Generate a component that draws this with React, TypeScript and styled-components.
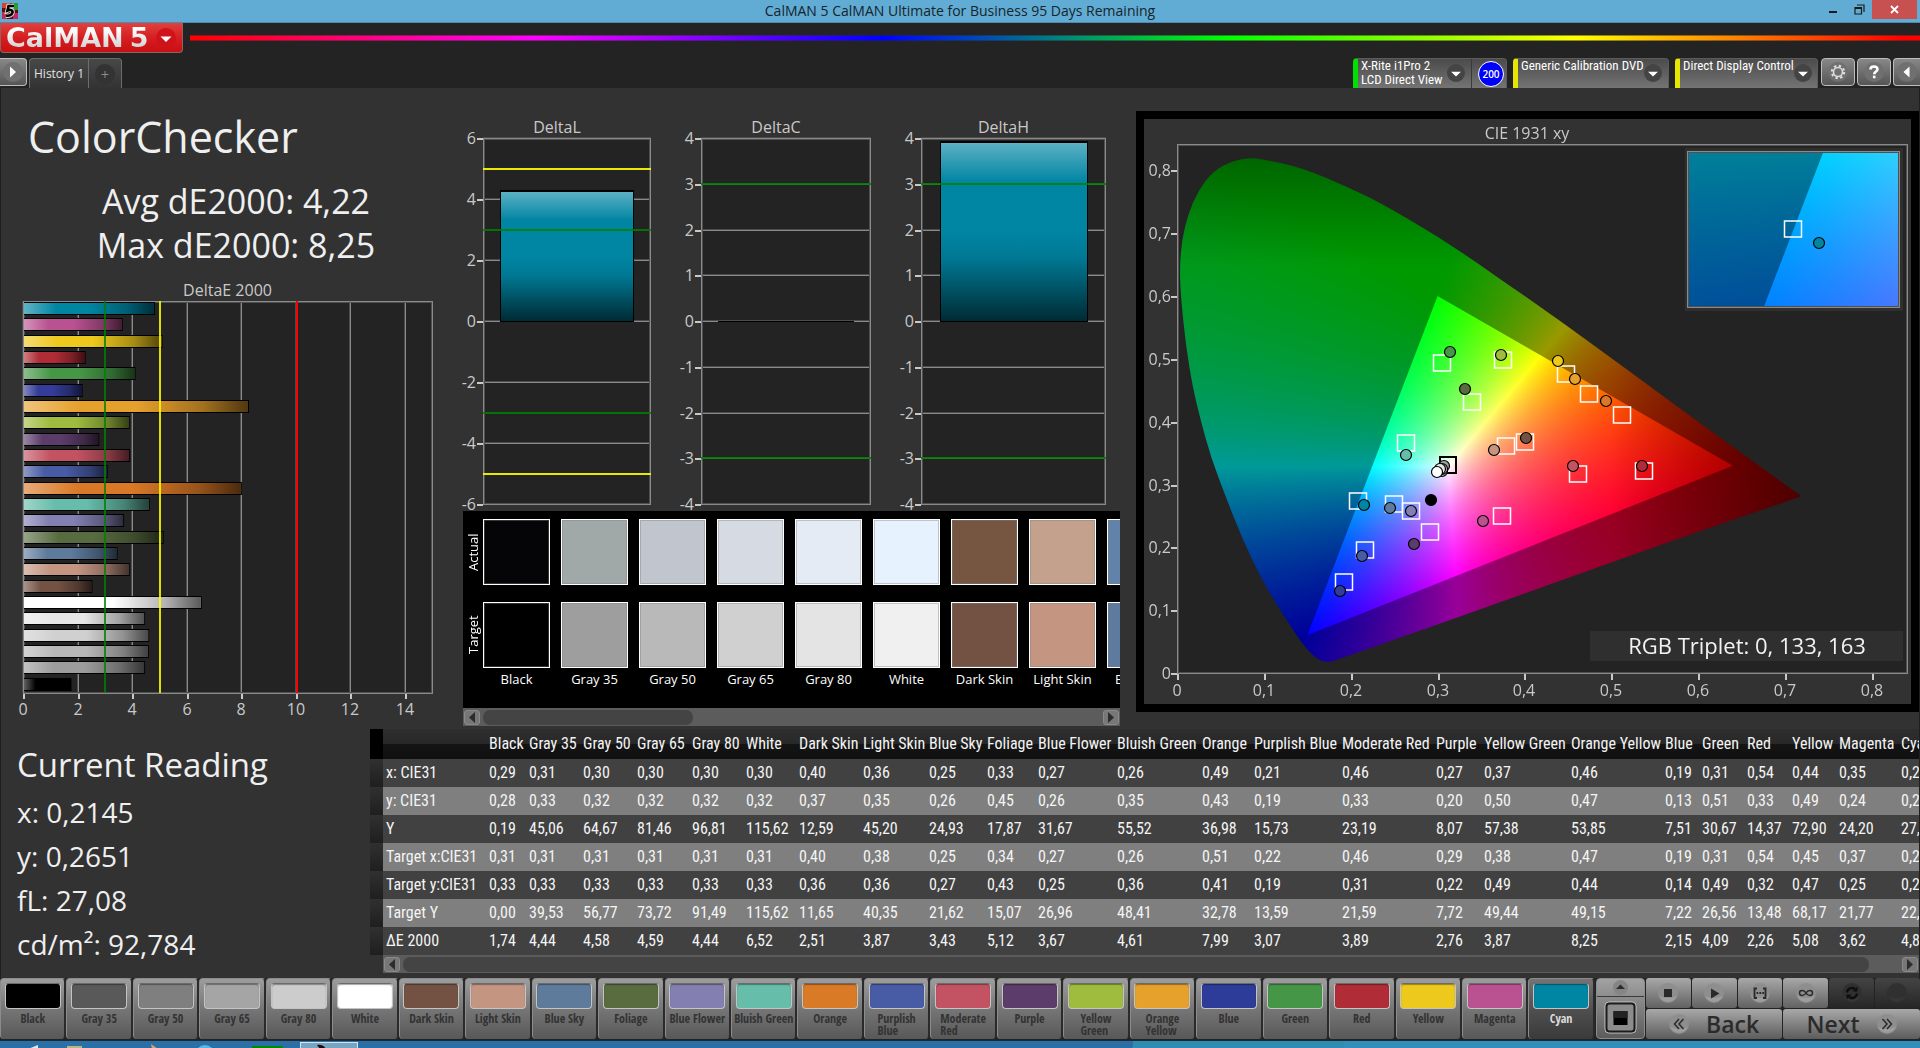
import React, { useLayoutEffect, useRef, useState } from 'react';
import styled, { createGlobalStyle, css } from 'styled-components';

const NARROW = '"Roboto Condensed", "Liberation Sans Narrow", "Open Sans Condensed Light", "Open Sans Condensed", "Open Sans", sans-serif';
const NARROW_BOLD = '"Open Sans Condensed", "Roboto Condensed", "Open Sans", sans-serif';

const GlobalStyle = createGlobalStyle`
  *, *::before, *::after { box-sizing: border-box; }
  body {
    margin: 0;
    background: #232323;
    color: #efefef;
    font-family: "Open Sans", "Noto Sans", sans-serif;
    overflow: hidden;
  }
  button { font: inherit; color: inherit; border: 0; padding: 0; margin: 0; background: none; }
  h1, h2, p, figure { margin: 0; font-weight: 400; }
  svg { display: block; }
`;

/* ---------- data ---------- */

type Patch = {
  name: string;
  lines?: string[];
  tile: string;
  bar: string;
  width: number;
  values: string[];
  target: [number, number];
  actual: [number, number];
};

const patch = (
  name: string, tile: string, bar: string, width: number, values: string,
  target: [number, number], actual: [number, number], lines?: string[],
): Patch => ({ name, tile, bar, width, values: values.split(' '), target, actual, lines });

const WP: [number, number] = [0.3112, 0.3308];

const PATCHES: Patch[] = [
  patch('Black', '#000000', '#000000', 40, '0,29 0,28 0,19 0,31 0,33 0,00 1,74', WP, [0.2912, 0.276]),
  patch('Gray 35', '#595959', '#9c9c9c', 54, '0,31 0,33 45,06 0,31 0,33 39,53 4,44', WP, [0.3062, 0.3302]),
  patch('Gray 50', '#7f7f7f', '#b8b8b8', 54, '0,30 0,32 64,67 0,31 0,33 56,77 4,58', WP, [0.3043, 0.3211]),
  patch('Gray 65', '#a5a5a5', '#d0d0d0', 55, '0,30 0,32 81,46 0,31 0,33 73,72 4,59', WP, [0.3036, 0.324]),
  patch('Gray 80', '#cccccc', '#e6e6e6', 54, '0,30 0,32 96,81 0,31 0,33 91,49 4,44', WP, [0.302, 0.3245]),
  patch('White', '#ffffff', '#ffffff', 53, '0,30 0,32 115,62 0,31 0,33 115,62 6,52', WP, [0.2981, 0.3193]),
  patch('Dark Skin', '#735244', '#735244', 64, '0,40 0,37 12,59 0,40 0,36 11,65 2,51', [0.3994, 0.3668], [0.4011, 0.3735]),
  patch('Light Skin', '#c49682', '#c49682', 66, '0,36 0,35 45,20 0,38 0,36 40,35 3,87', [0.3781, 0.3595], [0.3635, 0.3546]),
  patch('Blue Sky', '#5e7b9c', '#5e7b9c', 58, '0,25 0,26 24,93 0,25 0,27 21,62 3,43', [0.2482, 0.2669], [0.244, 0.262]),
  patch('Foliage', '#586c40', '#586c40', 51, '0,33 0,45 17,87 0,34 0,43 15,07 5,12', [0.3381, 0.4295], [0.3308, 0.4515]),
  patch('Blue Flower', '#8380b1', '#8380b1', 79, '0,27 0,26 31,67 0,27 0,25 26,96 3,67', [0.2678, 0.2559], [0.2678, 0.2571]),
  patch('Bluish Green', '#66bdaa', '#66bdaa', 85, '0,26 0,35 55,52 0,26 0,36 48,41 4,61', [0.262, 0.3643], [0.262, 0.3473]),
  patch('Orange', '#d97a26', '#d97826', 52, '0,49 0,43 36,98 0,51 0,41 32,78 7,99', [0.511, 0.4088], [0.4933, 0.4326]),
  patch('Purplish Blue', '#485ba5', '#485ba5', 88, '0,21 0,19 15,73 0,22 0,19 13,59 3,07', [0.2155, 0.1938], [0.2121, 0.187], ['Purplish', 'Blue']),
  patch('Moderate Red', '#c35362', '#c35362', 94, '0,46 0,33 23,19 0,46 0,31 21,59 3,89', [0.461, 0.315], [0.4553, 0.3302], ['Moderate', 'Red']),
  patch('Purple', '#5c3c6a', '#5c3c6a', 48, '0,27 0,20 8,07 0,29 0,22 7,72 2,76', [0.2897, 0.2224], [0.2712, 0.2059]),
  patch('Yellow Green', '#9fbc3f', '#9fbc3f', 87, '0,37 0,50 57,38 0,38 0,49 49,44 3,87', [0.3738, 0.496], [0.3723, 0.5057], ['Yellow', 'Green']),
  patch('Orange Yellow', '#e6a12c', '#e6a02c', 94, '0,46 0,47 53,85 0,47 0,44 49,15 8,25', [0.473, 0.4423], [0.4576, 0.4679], ['Orange', 'Yellow']),
  patch('Blue', '#2d3c98', '#333c98', 37, '0,19 0,13 7,51 0,19 0,14 7,22 2,15', [0.1917, 0.1426], [0.1867, 0.1298]),
  patch('Green', '#469647', '#469647', 45, '0,31 0,51 30,67 0,31 0,49 26,56 4,09', [0.3035, 0.4911], [0.3127, 0.5106]),
  patch('Red', '#b02c37', '#b02c37', 45, '0,54 0,33 14,37 0,54 0,32 13,48 2,26', [0.5364, 0.3193], [0.5348, 0.329]),
  patch('Yellow', '#edc81d', '#edc81d', 47, '0,44 0,49 72,90 0,45 0,47 68,17 5,08', [0.4464, 0.4746], [0.4372, 0.4959]),
  patch('Magenta', '#ba5292', '#ba5292', 62, '0,35 0,24 24,20 0,37 0,25 21,77 3,62', [0.3727, 0.248], [0.3508, 0.2413]),
  patch('Cyan', '#0085a3', '#0085a3', 60, '0,21 0,27 27,08 0,21 0,27 22,21 4,80', [0.2067, 0.2717], [0.2136, 0.2669]),
];

const METRICS = ['x: CIE31', 'y: CIE31', 'Y', 'Target x:CIE31', 'Target y:CIE31', 'Target Y', 'ΔE 2000'];

const SWATCHES = [
  { name: 'Black', actual: '#050508', target: '#000000' },
  { name: 'Gray 35', actual: '#a1a8a8', target: '#9e9e9e' },
  { name: 'Gray 50', actual: '#c1c5ce', target: '#b9b9b9' },
  { name: 'Gray 65', actual: '#d6dae3', target: '#d0d0d0' },
  { name: 'Gray 80', actual: '#e4ebf4', target: '#e4e4e4' },
  { name: 'White', actual: '#e7f2ff', target: '#f0f0f0' },
  { name: 'Dark Skin', actual: '#765541', target: '#735244' },
  { name: 'Light Skin', actual: '#c3a18d', target: '#c49682' },
  { name: 'Blue Sky', actual: '#6183aa', target: '#5e7b9f' },
];

const LOCUS: [number, number][] = [
  [0.0772, 0.8195], [0.0945, 0.8195], [0.1445, 0.8042], [0.1982, 0.7726], [0.2367, 0.7464],
  [0.2905, 0.7025], [0.3289, 0.669], [0.3673, 0.6312], [0.4057, 0.5953], [0.471, 0.5305],
  [0.6401, 0.3595], [0.7189, 0.2815], [0.7189, 0.2815], [0.5978, 0.2236], [0.4979, 0.1748], [0.3942, 0.1235],
  [0.2981, 0.0762], [0.2328, 0.0445], [0.179, 0.0183], [0.1713, 0.0171], [0.1598, 0.0232],
  [0.1445, 0.0457], [0.1214, 0.0944], [0.0984, 0.1462], [0.0753, 0.2132], [0.0561, 0.2803],
  [0.0388, 0.3442], [0.0273, 0.4021], [0.0177, 0.457], [0.01, 0.524], [0.005, 0.591],
  [0.0031, 0.6336], [0.0042, 0.6702], [0.0081, 0.7068], [0.0177, 0.7494], [0.033, 0.786],
  [0.0523, 0.8091],
];

const REC709: [number, number][] = [[0.64, 0.33], [0.3, 0.6], [0.15, 0.06]];

/* ---------- helpers ---------- */

function useSize<T extends Element>() {
  const ref = useRef<T>(null);
  const [size, setSize] = useState({ w: 0, h: 0 });
  useLayoutEffect(() => {
    const el = ref.current;
    if (!el) return;
    const measure = () => {
      const r = el.getBoundingClientRect();
      setSize({ w: Math.round(r.width), h: Math.round(r.height) });
    };
    measure();
    const ro = new ResizeObserver(measure);
    ro.observe(el);
    return () => ro.disconnect();
  }, []);
  return [ref, size] as const;
}

const num = (s: string) => parseFloat(s.replace(',', '.'));
const fmt = (n: number) => (n === 0 ? '0' : n.toFixed(1).replace('.', ','));

function chroma(x: number, y: number): [number, number, number] {
  const yy = Math.max(y, 0.001);
  const X = x / yy;
  const Z = (1 - x - yy) / yy;
  const r = Math.max(0, 3.2406 * X - 1.5372 - 0.4986 * Z);
  const g = Math.max(0, -0.9689 * X + 1.8758 + 0.0415 * Z);
  const b = Math.max(0, 0.0557 * X - 0.204 + 1.057 * Z);
  let k = 255 / Math.max(r, g, b, 0.0001);
  if (x > 0.5) k *= Math.max(0.48, 1 - (x - 0.5) * 2.3);
  if (y > 0.65) k *= 1 - (y - 0.65) * 2;
  return [r * k, g * k, b * k];
}

type View = { x0: number; x1: number; y0: number; y1: number };
type Rect = { x: number; y: number; w: number; h: number };

function paintGamut(ctx: CanvasRenderingContext2D, r: Rect, v: View) {
  const layer = (dim: number) => {
    const c = document.createElement('canvas');
    c.width = r.w;
    c.height = r.h;
    const cx = c.getContext('2d')!;
    const img = cx.createImageData(r.w, r.h);
    for (let j = 0; j < r.h; j++) {
      const y = v.y1 - ((j + 0.5) / r.h) * (v.y1 - v.y0);
      for (let i = 0; i < r.w; i++) {
        const x = v.x0 + ((i + 0.5) / r.w) * (v.x1 - v.x0);
        const [cr, cg, cb] = chroma(x, y);
        const o = (j * r.w + i) * 4;
        img.data[o] = cr * dim;
        img.data[o + 1] = cg * dim;
        img.data[o + 2] = cb * dim;
        img.data[o + 3] = 255;
      }
    }
    cx.putImageData(img, 0, 0);
    return c;
  };
  const px = (p: [number, number]): [number, number] => [
    r.x + ((p[0] - v.x0) / (v.x1 - v.x0)) * r.w,
    r.y + ((v.y1 - p[1]) / (v.y1 - v.y0)) * r.h,
  ];
  const trace = (pts: [number, number][], smooth: boolean) => {
    const q = pts.map(px);
    ctx.beginPath();
    if (!smooth) {
      q.forEach((p, i) => (i ? ctx.lineTo(p[0], p[1]) : ctx.moveTo(p[0], p[1])));
    } else {
      const n = q.length;
      ctx.moveTo((q[n - 1][0] + q[0][0]) / 2, (q[n - 1][1] + q[0][1]) / 2);
      for (let i = 0; i < n; i++) {
        const nx = q[(i + 1) % n];
        ctx.quadraticCurveTo(q[i][0], q[i][1], (q[i][0] + nx[0]) / 2, (q[i][1] + nx[1]) / 2);
      }
    }
    ctx.closePath();
  };
  ctx.save();
  ctx.beginPath();
  ctx.rect(r.x, r.y, r.w, r.h);
  ctx.clip();
  ctx.save();
  trace(LOCUS, true);
  ctx.clip();
  ctx.drawImage(layer(0.6), r.x, r.y);
  ctx.restore();
  ctx.save();
  trace(REC709, false);
  ctx.clip();
  ctx.drawImage(layer(1), r.x, r.y);
  ctx.restore();
  ctx.restore();
}

/* ---------- shell ---------- */

const Shell = styled.div`
  display: flex;
  flex-direction: column;
  height: 100vh;
  min-height: 900px;
  overflow: hidden;
`;

const TitleBar = styled.header`
  display: grid;
  grid-template-columns: 1fr auto 1fr;
  align-items: center;
  flex: none;
  height: 23px;
  background: #60acd4;
  border-bottom: 1px solid #4b8cae;
  color: #17242c;
  font-size: 14px;
  line-height: 20px;
`;

const AppMark = styled.svg`
  margin-left: 2px;
`;

const WindowButtons = styled.div`
  display: flex;
  justify-self: end;
  align-self: start;
  height: 19px;
  padding-right: 3px;
  button { width: 26px; display: grid; place-items: center; }
  button:last-child { width: 45px; background: #c75050; }
`;

const BrandRow = styled.div`
  display: flex;
  flex: none;
  gap: 7px;
  height: 30px;
`;

const Brand = styled.button`
  display: flex;
  align-items: center;
  gap: 8px;
  width: 183px;
  padding-left: 5px;
  border: 1px solid #8d6464;
  border-top: 0;
  border-radius: 0 0 4px 4px;
  background: linear-gradient(#e0413f, #d61f22 50%, #c80f12);
`;

const BrandName = styled.span`
  display: flex;
  gap: 6px;
  font: bold 27px/27px "DejaVu Sans", sans-serif;
  background: linear-gradient(#ffffff 20%, #c9c9c9);
  background-clip: text;
  -webkit-background-clip: text;
  color: transparent;
`;

const Rainbow = styled.div`
  flex: 1;
  height: 6px;
  margin-top: 12px;
  border: 1px solid rgba(40, 40, 40, 0.5);
  border-width: 1px 0;
  background: linear-gradient(90deg, #f00, #f0f 20%, #00f 40%, #0f0 60%, #ff0 80%, #f00 99%);
`;

const TabRow = styled.div`
  display: flex;
  align-items: flex-start;
  justify-content: space-between;
  flex: none;
  height: 35px;
  padding-top: 5px;
`;

const Cluster = styled.div`
  display: flex;
`;

const Devices = styled.div`
  display: flex;
  gap: 6px;
  margin-right: 3px;
`;

const ToolButton = styled.button`
  display: grid;
  place-items: center;
  width: 34px;
  height: 28px;
  margin-right: 2px;
  border: 1px solid #bdbdbd;
  border-radius: 4px;
  background: linear-gradient(#888, #555);
  &:last-child { width: 27px; margin-right: 0; border-right: 0; border-radius: 4px 0 0 4px; }
`;

const ExpandButton = styled(ToolButton)`
  && { width: 27px; border: 1px solid #bdbdbd; border-left: 0; border-radius: 0 4px 4px 0; }
`;

const HistoryTabs = styled.div`
  display: flex;
  height: 30px;
  border: 1px solid #6c6c6c;
  border-bottom: 0;
  border-radius: 4px 4px 0 0;
  background: linear-gradient(#484848, #333);
  font-size: 12px;
  line-height: 16px;
  color: #e2e2e2;
  button { width: 58px; }
  button + button { display: grid; place-items: center; width: 33px; border-left: 1px solid #6c6c6c; }
`;

const Device = styled.div<{ $strip: string; $w: number }>`
  display: flex;
  width: ${(p) => p.$w}px;
  height: 30px;
  padding-left: 3px;
  border: 1px solid #5c5c5c;
  border-left: 5px solid ${(p) => p.$strip};
  border-bottom: 0;
  border-radius: 4px 4px 0 0;
  background: linear-gradient(#4b4b4b, #747474);
  color: #fff;
`;

const DeviceName = styled.button`
  display: flex;
  flex: 1;
  justify-content: space-between;
  align-items: flex-start;
  text-align: left;
  font: 13px/14px ${NARROW};
  white-space: pre;
  svg { margin: 5px 6px 0 0; flex: none; }
`;

const ReadCount = styled.span`
  display: grid;
  place-items: center;
  width: 35px;
  padding-left: 4px;
  border-left: 1px solid #3a3a3a;
  span {
    display: grid;
    place-items: center;
    width: 26px;
    height: 26px;
    border: 1px solid #fff;
    border-radius: 50%;
    background: #0000ff;
    font-size: 10px;
    font-weight: 600;
  }
`;

const Knob: React.FC<{ kind: 'right' | 'left' | 'down' | 'up' | 'plus' | 'gear' | 'help'; size?: number; tone?: string; ink?: string }> = ({
  kind, size = 20, tone = '#3c3c3c', ink = '#fff',
}) => (
  <svg width={size} height={size} viewBox="0 0 20 20" aria-hidden="true">
    <circle cx="10" cy="10" r="10" fill={tone} />
    {kind === 'right' && <path d="M7 4.500 L13 10 L7 15.500z" fill={ink} />}
    {kind === 'left' && <path d="M12.500 4.500 L6.500 10 L12.500 15.500z" fill={ink} />}
    {kind === 'down' && <path d="M4.500 8.500 H15.500 L10 14z" fill={ink} />}
    {kind === 'up' && <path d="M4 12 H16 L10 6z" fill={ink} />}
    {kind === 'plus' && <path d="M10 7 V14 M6.500 10.500 H13.500" stroke="#8b8b8b" strokeWidth="1" fill="none" />}
    {kind === 'gear' && (
      <g fill="none" stroke="#ddd">
        <circle cx="10" cy="10" r="4.500" strokeWidth="1.600" />
        <circle cx="10" cy="10" r="6.200" strokeDasharray="2.400 2.470" strokeWidth="2" />
      </g>
    )}
    {kind === 'help' && (
      <g fill="none" stroke="#fff" strokeWidth="2.600">
        <path d="M6.500 7.500 C6.500 3.500 13.500 3.500 13.500 7.300 C13.500 9.500 10.200 9.500 10.200 12.200" />
        <path d="M10.200 13.600 V16.300" />
      </g>
    )}
  </svg>
);

/* ---------- main area ---------- */

const Main = styled.main`
  display: flex;
  flex-direction: column;
  flex: 1;
  min-height: 0;
  border: 1px solid #1f1f1f;
  border-width: 0 1px;
  background: #323232;
`;

const Upper = styled.div`
  display: grid;
  grid-template-columns: minmax(0, 440fr) minmax(0, 679fr) minmax(0, 799fr);
  flex: 1;
  min-height: 0;
`;

const Column = styled.section<{ $pad: string }>`
  display: flex;
  flex-direction: column;
  min-height: 0;
  padding: ${(p) => p.$pad};
`;

const Heading = styled.h1`
  padding-left: 27px;
  font-size: 43px;
  line-height: 52px;
`;

const Stats = styled.div`
  padding: 16px 0 9px 30px;
  font-size: 34px;
  line-height: 44px;
  text-align: center;
`;

const ChartSvg = styled.svg`
  flex: 1;
  width: 100%;
  min-height: 0;
  text { font-size: 16px; fill: #c9c9c9; }
`;

const DeltaRow = styled.div`
  display: grid;
  grid-template-columns: minmax(0, 210fr) minmax(0, 212fr) minmax(0, 227fr);
  gap: 8px;
  flex: 1;
  min-height: 0;
  padding-right: 14px;
  > svg { height: 100%; }
`;

const Frame: React.FC<Rect> = ({ x, y, w, h }) => (
  <g fill="none">
    <rect x={x + 1.5} y={y + 1.5} width={w - 2} height={h - 2} stroke="#505050" />
    <rect x={x + 0.5} y={y + 0.5} width={w} height={h} stroke="#8a8a8a" />
  </g>
);

const ErrorBars: React.FC = () => {
  const [ref, { w, h }] = useSize<SVGSVGElement>();
  const box = { x: 22, y: 25, w: w - 31, h: h - 61 };
  const sx = (v: number) => Math.round(box.x + (v / 15) * box.w);
  const pitch = box.h / 24;
  const bars = [...PATCHES].reverse();
  return (
    <ChartSvg ref={ref} role="img" aria-label="DeltaE 2000">
      {w > 0 && (
        <>
          <defs>
            <linearGradient id="glossX">
              <stop offset="0" stopColor="#fff" stopOpacity="0.38" />
              <stop offset="0.25" stopColor="#fff" stopOpacity="0" />
              <stop offset="0.5" stopColor="#000" stopOpacity="0" />
              <stop offset="0.8" stopColor="#000" stopOpacity="0.3" />
              <stop offset="1" stopColor="#000" stopOpacity="0.65" />
            </linearGradient>
          </defs>
          <text x={box.x + box.w / 2} y={20} textAnchor="middle">DeltaE 2000</text>
          <rect x={box.x} y={box.y} width={box.w} height={box.h} fill="#232323" />
          {[0, 2, 4, 6, 8, 10, 12, 14].map((v) => (
            <g key={v}>
              <rect x={sx(v) - 1} y={box.y} width={1} height={box.h} fill="#4c4c4c" />
              <rect x={sx(v)} y={box.y} width={1} height={box.h} fill="#8a8a8a" />
              <rect x={sx(v)} y={box.y + box.h + 1} width={2} height={5} fill="#c9c9c9" />
              <text x={sx(v)} y={box.y + box.h + 22} textAnchor="middle">{v}</text>
            </g>
          ))}
          <Frame {...box} />
          {bars.map((p, i) => {
            const y = Math.round(box.y + i * pitch + 1);
            const bw = (num(p.values[6]) / 15) * box.w;
            return (
              <g key={p.name}>
                <rect x={box.x + 1} y={y} width={bw} height={13} fill="#000" />
                <rect x={box.x + 1} y={y + 1} width={bw - 1} height={11} fill={p.bar} />
                <rect x={box.x + 1} y={y + 1} width={bw - 1} height={11} fill="url(#glossX)" />
              </g>
            );
          })}
          <rect x={sx(3) - 1} y={box.y} width={2} height={box.h} fill="#008000" fillOpacity="0.8" />
          <rect x={sx(5)} y={box.y} width={2} height={box.h} fill="#ffff00" fillOpacity="0.85" />
          <rect x={sx(10)} y={box.y} width={2} height={box.h} fill="#ff0000" />
        </>
      )}
    </ChartSvg>
  );
};

const DeltaChart: React.FC<{ title: string; max: number; step: number; value: number; warn?: boolean }> = ({
  title, max, step, value, warn,
}) => {
  const [ref, { w, h }] = useSize<SVGSVGElement>();
  const box = { x: 42, y: 28, w: w - 42, h: h - 35 };
  const sy = (v: number) => Math.round(box.y + ((max - v) / (2 * max)) * box.h);
  const ticks: number[] = [];
  for (let v = max; v >= -max; v -= step) ticks.push(v);
  const bx = Math.round(box.x + box.w * 0.1);
  const bw = Math.round(box.w * 0.8);
  return (
    <ChartSvg ref={ref} role="img" aria-label={title}>
      {w > 0 && (
        <>
          <defs>
            <linearGradient id={'gloss' + title} x2="0" y2="1">
              <stop offset="0" stopColor="#fff" stopOpacity="0.36" />
              <stop offset="0.22" stopColor="#fff" stopOpacity="0" />
              <stop offset="0.5" stopColor="#000" stopOpacity="0" />
              <stop offset="0.65" stopColor="#000" stopOpacity="0.1" />
              <stop offset="1" stopColor="#000" stopOpacity="0.68" />
            </linearGradient>
          </defs>
          <text x={box.x + box.w / 2 - 10} y={23} textAnchor="middle">{title}</text>
          <rect x={box.x} y={box.y} width={box.w} height={box.h} fill="#232323" />
          {ticks.map((v) => (
            <g key={v}>
              <rect x={box.x} y={sy(v) - 1} width={box.w} height={1} fill="#4c4c4c" />
              <rect x={box.x} y={sy(v)} width={box.w} height={1} fill="#8a8a8a" />
              <rect x={box.x - 6} y={sy(v)} width={6} height={2} fill="#c9c9c9" />
              <text x={box.x - 7} y={sy(v) + 6} textAnchor="end">{v}</text>
            </g>
          ))}
          <Frame x={box.x} y={box.y} w={box.w - 1} h={box.h} />
          <rect x={bx} y={sy(value)} width={bw} height={sy(0) - sy(value) + 1} fill="#000" />
          {value > 0.1 && (
            <>
              <rect x={bx + 1} y={sy(value) + 2} width={bw - 2} height={sy(0) - sy(value) - 2} fill="#0085a3" />
              <rect x={bx + 1} y={sy(value) + 2} width={bw - 2} height={sy(0) - sy(value) - 2} fill={`url(#gloss${title})`} />
            </>
          )}
          {[3, -3].map((v) => (
            <rect key={v} x={box.x} y={sy(v) - 1} width={box.w} height={2} fill="#008000" fillOpacity="0.85" />
          ))}
          {warn && [5, -5].map((v) => (
            <rect key={v} x={box.x} y={sy(v) - 1} width={box.w} height={2} fill="#ffff00" fillOpacity="0.9" />
          ))}
        </>
      )}
    </ChartSvg>
  );
};

/* ---------- swatches ---------- */

const SwatchPanel = styled.div`
  flex: none;
  margin-left: 22px;
  background: #000;
  color: #fff;
  overflow: hidden;
`;

const SwatchGrid = styled.div`
  display: grid;
  grid-template-columns: 20px repeat(9, 78px);
  grid-template-rows: 66px 66px 20px;
  row-gap: 17px;
  height: 197px;
  padding-top: 8px;
  font-size: 13px;
`;

const SideLabel = styled.span`
  writing-mode: vertical-rl;
  transform: rotate(180deg);
  justify-self: center;
  text-align: center;
  line-height: 18px;
`;

const Swatch = styled.div<{ $color: string }>`
  width: 67px;
  border: 1px solid #fff;
  outline: 1px solid rgba(128, 128, 128, 0.4);
  outline-offset: -2px;
  background: ${(p) => p.$color};
`;

const SwatchName = styled.span`
  width: 67px;
  margin-top: -16px;
  line-height: 20px;
  text-align: center;
  white-space: nowrap;
`;

const ScrollTrack = styled.div<{ $h: number }>`
  display: flex;
  align-items: center;
  gap: 3px;
  height: ${(p) => p.$h}px;
  padding: 0 1px;
  background: #5c5c5c;
  button {
    display: grid;
    place-items: center;
    width: 16px;
    height: 15px;
    border: 1px solid #8a8a8a;
    border-radius: 3px;
    background: #777;
  }
`;

const ThumbLane = styled.div<{ $fill: number }>`
  flex: 1;
  height: 15px;
  &::before {
    content: '';
    display: block;
    width: ${(p) => p.$fill}%;
    height: 100%;
    border-radius: 7px;
    background: #444;
  }
`;

const ScrollBar: React.FC<{ fill: number; h: number }> = ({ fill, h }) => (
  <ScrollTrack $h={h}>
    <button type="button" aria-label="Scroll left">
      <svg width="8" height="11"><path d="M7 0 V11 L1 5.500z" fill="#2c2c2c" /></svg>
    </button>
    <ThumbLane $fill={fill} />
    <button type="button" aria-label="Scroll right">
      <svg width="8" height="11"><path d="M1 0 V11 L7 5.500z" fill="#2c2c2c" /></svg>
    </button>
  </ScrollTrack>
);

/* ---------- chromaticity diagram ---------- */

const CiePanel = styled.figure`
  display: grid;
  flex: 1;
  min-height: 0;
  border: 8px solid #000;
  > canvas, > svg { grid-area: 1 / 1; width: 100%; height: 100%; min-width: 0; min-height: 0; }
  svg text { font-size: 16px; fill: #c9c9c9; }
  svg text.triplet { font-size: 22px; fill: #f2f2f2; }
`;

const Cie: React.FC = () => {
  const [ref, { w, h }] = useSize<SVGSVGElement>();
  const canvas = useRef<HTMLCanvasElement>(null);
  const box: Rect = { x: 33, y: 25, w: w - 37, h: h - 56 };
  const view: View = { x0: 0, x1: 0.8405, y0: 0, y1: 0.842 };
  const lens: Rect = { x: w - 223, y: 33, w: 211, h: 155 };
  const focus: [number, number] = [0.2088, 0.2717];
  const zoom = 4;
  const spanX = (lens.w / zoom / (box.w || 1)) * view.x1;
  const spanY = (lens.h / zoom / (box.h || 1)) * view.y1;
  const lensView: View = {
    x0: focus[0] - spanX / 2, x1: focus[0] + spanX / 2,
    y0: focus[1] - spanY / 2, y1: focus[1] + spanY / 2,
  };

  useLayoutEffect(() => {
    const c = canvas.current;
    if (!c || !w || !h) return;
    c.width = w;
    c.height = h;
    const ctx = c.getContext('2d')!;
    ctx.fillStyle = '#323232';
    ctx.fillRect(0, 0, w, h);
    ctx.fillStyle = '#232323';
    ctx.fillRect(box.x, box.y, box.w, box.h);
    paintGamut(ctx, box, view);
    ctx.fillStyle = '#2f2f2f';
    ctx.fillRect(lens.x - 3, lens.y - 4, lens.w + 7, lens.h + 8);
    paintGamut(ctx, lens, lensView);
  }, [w, h]);

  const sx = (v: number) => Math.round(box.x + (v / view.x1) * box.w);
  const sy = (v: number) => Math.round(box.y + box.h - (v / view.y1) * box.h);
  const mx = (v: number) => sx(v) + 1;
  const lx = Math.floor(lens.x + lens.w / 2);
  const ly = Math.floor(lens.y + lens.h / 2);
  const steps = [0, 0.1, 0.2, 0.3, 0.4, 0.5, 0.6, 0.7, 0.8];
  const colored = PATCHES.slice(6);
  const neutrals = PATCHES.slice(0, 6);

  return (
    <CiePanel>
      <canvas ref={canvas} />
      <svg ref={ref} role="img" aria-label="CIE 1931 xy">
        {w > 0 && (
          <>
            <text x={box.x + box.w / 2 - 15} y={20} textAnchor="middle">CIE 1931 xy</text>
            <Frame {...box} />
            {steps.map((v) => (
              <g key={v}>
                <rect x={sx(v)} y={box.y + box.h + 1} width={2} height={6} fill="#c9c9c9" />
                <text x={sx(v)} y={box.y + box.h + 23} textAnchor="middle">{fmt(v)}</text>
                <rect x={box.x - 6} y={sy(v)} width={6} height={2} fill="#c9c9c9" />
                <text x={box.x - 6} y={sy(v) + 6} textAnchor="end">{fmt(v)}</text>
              </g>
            ))}
            <rect x={mx(WP[0]) - 8} y={sy(WP[1]) - 8} width={16} height={16} fill="none" stroke="#000" strokeWidth="2" />
            {colored.map((p) => (
              <rect key={p.name} x={mx(p.target[0]) - 8.5} y={sy(p.target[1]) - 9} width={17} height={16} fill="none" stroke="#fff" strokeWidth="1.500" />
            ))}
            {neutrals.concat(colored).map((p) => (
              <circle key={p.name} cx={mx(p.actual[0])} cy={sy(p.actual[1])} r={5.5} fill={p.bar} stroke="#000" strokeWidth="1.200" />
            ))}
            <Frame x={lens.x - 1} y={lens.y - 1} w={lens.w + 1} h={lens.h + 1} />
            <rect x={lx - 8.5} y={ly - 8} width={17} height={16} fill="none" stroke="#fff" strokeWidth="1.500" />
            <circle cx={lx + 26} cy={ly + 14} r={5.5} fill="#0085a3" stroke="#000" strokeWidth="1.200" />
            <rect x={w - 321} y={h - 73} width={313} height={30} fill="#2f2f2f" />
            <text className="triplet" x={w - 164} y={h - 50} textAnchor="middle">RGB Triplet: 0, 133, 163</text>
          </>
        )}
      </svg>
    </CiePanel>
  );
};

/* ---------- lower area ---------- */

const Lower = styled.div`
  display: flex;
  flex: none;
  padding-bottom: 5px;
`;

const Reading = styled.section`
  flex: none;
  width: 369px;
  padding: 12px 0 0 16px;
  h2 { margin-bottom: 1px; font-size: 33px; line-height: 48px; }
  p { font-size: 28px; line-height: 44px; }
`;

const TableWrap = styled.div`
  flex: 1;
  min-width: 0;
  overflow: hidden;
`;

const DataTable = styled.table`
  table-layout: fixed;
  width: 100%;
  border-collapse: collapse;
  font: 16px/28px ${NARROW};
  color: #f4f4f4;
  th, td { padding: 0; font-weight: 400; text-align: left; white-space: nowrap; }
  thead tr { height: 30px; background: linear-gradient(#2e2e2e, #282828 50%, #141414 50%, #101010); }
  tbody tr { height: 28px; background: #414141; }
  tbody tr:nth-child(even) { background: #7f7f7f; }
  thead td:first-child { background: #000; }
  tbody td:first-child { background: linear-gradient(#303030, #1f1f1f); }
  tbody th { padding-left: 3px; }
`;

const TableScroll = styled.div`
  padding-left: 13px;
`;

/* ---------- patch bar ---------- */

const PatchBar = styled.footer`
  display: flex;
  flex: none;
  height: 62px;
  background: #232323;
`;

const Tile = styled.button<{ $active?: boolean }>`
  display: flex;
  flex-direction: column;
  align-items: center;
  flex: 1 1 0;
  min-width: 0;
  height: 61px;
  padding-top: 4px;
  border: 1px solid #8c8c8c;
  border-width: 1px 0 0 1px;
  border-right: 2px solid #2a2a2a;
  border-radius: 4px;
  background: linear-gradient(#9d9d9d, #767676 50%, #585858);
  color: #333;
  font: bold 12px/12px ${NARROW_BOLD};
  text-align: left;
  white-space: nowrap;
  ${(p) => p.$active && css`
    background: linear-gradient(#747474, #505050 50%, #3a3a3a);
    color: #dcdcdc;
  `}
`;

const Chip = styled.span<{ $color: string }>`
  flex: none;
  width: 56px;
  height: 26px;
  margin-bottom: 4px;
  border: 1px solid #c4c4c4;
  border-top-color: #6a6a6a;
  border-radius: 4px;
  background: ${(p) => p.$color};
  box-shadow: inset 0 1px 1px rgba(0, 0, 0, 0.35);
`;

const WindowColumn = styled.div`
  display: flex;
  flex-direction: column;
  flex: none;
  width: 49px;
  height: 61px;
  margin: 0 1px 0 1px;
  border: 1px solid #8c8c8c;
  border-radius: 4px;
  background: linear-gradient(#a2a2a2, #5c5c5c);
  button { display: grid; place-items: center; }
  button:first-child { height: 18px; border-bottom: 1px solid #3a3a3a; }
  button:last-child { flex: 1; }
`;

const Transport = styled.div`
  display: grid;
  grid-template-columns: repeat(12, minmax(0, 1fr));
  grid-template-rows: 30px 30px;
  gap: 1px;
  flex: none;
  width: 274px;
`;

const TransportButton = styled.button<{ $off?: boolean }>`
  display: grid;
  grid-column: span 2;
  place-items: center;
  border-radius: 3px;
  background: ${(p) => (p.$off ? 'linear-gradient(#444, #262626)' : 'linear-gradient(#a8a8a8, #626262)')};
`;

const StepButton = styled.button`
  display: flex;
  grid-column: span 6;
  align-items: center;
  justify-content: center;
  gap: 17px;
  border-radius: 3px;
  background: linear-gradient(#a8a8a8, #5c5c5c);
  color: #2b2b2b;
  font-size: 23px;
  font-weight: 600;
  line-height: 30px;
`;

const Disc: React.FC<{ off?: boolean; children?: React.ReactNode }> = ({ off, children }) => (
  <svg width="20" height="20" viewBox="0 0 20 20" aria-hidden="true">
    <circle cx="10" cy="10" r="10" fill={off ? '#303030' : '#8e8e8e'} />
    <path d="M1 13 A10 10 0 0 0 19 13 Q10 17 1 13z" fill={off ? '#3a3a3a' : '#a9a9a9'} opacity="0.6" />
    {children}
  </svg>
);

const TaskBar = styled.div`
  flex: none;
  height: 8px;
  overflow: hidden;
  border-top: 1px solid #1d2a33;
  background: linear-gradient(100deg, #2a6fa6 0 59%, #2f8db4 59% 70%, #318fb9 70%);
`;

const App: React.FC = () => (
  <>
    <GlobalStyle />
    <Shell>
      <TitleBar>
        <AppMark width="16" height="16" viewBox="0 0 16 16" aria-hidden="true">
          <rect width="16" height="16" fill="#5b1212" />
          <rect width="8" height="5" fill="#d5432c" />
          <rect x="10" width="6" height="7" fill="#2b9a3a" />
          <rect y="9" width="5" height="7" fill="#c02c50" />
          <rect x="11" y="10" width="5" height="6" fill="#c0266a" />
          <path d="M12 3 H6.500 L5.500 7.500 C8 6.300 11 7 10.500 9.500 C10 12.500 6.500 13 4 12.500" fill="none" stroke="#e8e0d8" strokeWidth="4.400" />
          <path d="M12 3 H6.500 L5.500 7.500 C8 6.300 11 7 10.500 9.500 C10 12.500 6.500 13 4 12.500" fill="none" stroke="#000" strokeWidth="2.600" />
        </AppMark>
        <span>CalMAN 5 CalMAN Ultimate for Business 95 Days Remaining</span>
        <WindowButtons>
          <button type="button" aria-label="Minimize">
            <svg width="8" height="8"><path d="M0 6 H8" stroke="#1b1b1b" strokeWidth="2" /></svg>
          </button>
          <button type="button" aria-label="Restore">
            <svg width="11" height="11" fill="none" stroke="#1b1b1b"><path d="M1 3.500 H7.500 V10 H1z M1 4.500 H7.500 M3 1 H10 V8" strokeWidth="1.200" /></svg>
          </button>
          <button type="button" aria-label="Close">
            <svg width="9" height="9"><path d="M1 1 L8 8 M8 1 L1 8" stroke="#fff" strokeWidth="1.800" /></svg>
          </button>
        </WindowButtons>
      </TitleBar>

      <BrandRow>
        <Brand type="button">
          <BrandName><span>CalMAN</span><span>5</span></BrandName>
          <Knob kind="down" tone="#cf1318" />
        </Brand>
        <Rainbow />
      </BrandRow>

      <TabRow>
        <Cluster>
          <ExpandButton type="button" aria-label="Expand panel"><Knob kind="right" tone="#707070" /></ExpandButton>
          <HistoryTabs>
            <button type="button">History 1</button>
            <button type="button" aria-label="Add history"><Knob kind="plus" tone="#333" /></button>
          </HistoryTabs>
        </Cluster>
        <Cluster>
          <Devices>
            <Device $strip="#00e000" $w={154}>
              <DeviceName type="button">{'X-Rite i1Pro 2\nLCD Direct View'}<Knob kind="down" tone="#444" size={18} /></DeviceName>
              <ReadCount><span>200</span></ReadCount>
            </Device>
            <Device $strip="#e6e600" $w={156}>
              <DeviceName type="button">Generic Calibration DVD<Knob kind="down" tone="#444" size={18} /></DeviceName>
            </Device>
            <Device $strip="#e6e600" $w={143}>
              <DeviceName type="button">Direct Display Control<Knob kind="down" tone="#444" size={18} /></DeviceName>
            </Device>
          </Devices>
          <ToolButton type="button" aria-label="Settings"><Knob kind="gear" tone="#707070" /></ToolButton>
          <ToolButton type="button" aria-label="Help"><Knob kind="help" tone="#707070" /></ToolButton>
          <ToolButton type="button" aria-label="Collapse panel"><Knob kind="left" tone="#707070" /></ToolButton>
        </Cluster>
      </TabRow>

      <Main>
        <Upper>
          <Column $pad="23px 0 0">
            <Heading>ColorChecker</Heading>
            <Stats>
              <p>Avg dE2000: 4,22</p>
              <p>Max dE2000: 8,25</p>
            </Stats>
            <ErrorBars />
          </Column>
          <Column $pad="22px 0 3px">
            <DeltaRow>
              <DeltaChart title="DeltaL" max={6} step={2} value={4.3} warn />
              <DeltaChart title="DeltaC" max={4} step={1} value={0} />
              <DeltaChart title="DeltaH" max={4} step={1} value={3.94} />
            </DeltaRow>
            <SwatchPanel>
              <SwatchGrid>
                <SideLabel>Actual</SideLabel>
                {SWATCHES.map((s) => <Swatch key={s.name} $color={s.actual} />)}
                <SideLabel>Target</SideLabel>
                {SWATCHES.map((s) => <Swatch key={s.name} $color={s.target} />)}
                <span />
                {SWATCHES.map((s) => <SwatchName key={s.name}>{s.name}</SwatchName>)}
              </SwatchGrid>
              <ScrollBar fill={34} h={18} />
            </SwatchPanel>
          </Column>
          <Column $pad="23px 0 17px 16px">
            <Cie />
          </Column>
        </Upper>

        <Lower>
          <Reading>
            <h2>Current Reading</h2>
            <p>x: 0,2145</p>
            <p>y: 0,2651</p>
            <p>fL: 27,08</p>
            <p>cd/m²: 92,784</p>
          </Reading>
          <TableWrap>
            <DataTable>
              <colgroup>
                <col width={13} />
                <col width={106} />
                {PATCHES.map((p) => <col key={p.name} width={p.width} />)}
              </colgroup>
              <thead>
                <tr>
                  <td />
                  <td />
                  {PATCHES.map((p) => <th key={p.name} scope="col">{p.name}</th>)}
                </tr>
              </thead>
              <tbody>
                {METRICS.map((m, r) => (
                  <tr key={m}>
                    <td />
                    <th scope="row">{m}</th>
                    {PATCHES.map((p) => <td key={p.name}>{p.values[r]}</td>)}
                  </tr>
                ))}
              </tbody>
            </DataTable>
            <TableScroll><ScrollBar fill={98} h={18} /></TableScroll>
          </TableWrap>
        </Lower>
      </Main>

      <PatchBar>
        {PATCHES.map((p) => (
          <Tile key={p.name} type="button" $active={p.name === 'Cyan'}>
            <Chip $color={p.tile} />
            <span>{p.lines ? <>{p.lines[0]}<br />{p.lines[1]}</> : p.name}</span>
          </Tile>
        ))}
        <WindowColumn>
          <button type="button" aria-label="Raise"><Knob kind="up" size={15} tone="#858585" ink="#2b2b2b" /></button>
          <button type="button" aria-label="Pattern window">
            <svg width="33" height="33" viewBox="0 0 33 33">
              <rect x="1" y="1" width="31" height="31" rx="4" fill="#8c8c8c" stroke="#c4c4c4" />
              <rect x="2.500" y="2.500" width="28" height="28" rx="3" fill="none" stroke="#1c1c1c" strokeWidth="2" />
              <rect x="9.500" y="10" width="14" height="14" fill="#000" />
              <rect x="9.500" y="10" width="14" height="7" fill="#222" />
            </svg>
          </button>
        </WindowColumn>
        <Transport>
          <TransportButton type="button" aria-label="Stop"><Disc><rect x="6" y="6" width="8" height="8" fill="#2a2a2a" /></Disc></TransportButton>
          <TransportButton type="button" aria-label="Read"><Disc><path d="M7 5.500 L15.500 10.500 L7 15.500z" fill="#2a2a2a" /></Disc></TransportButton>
          <TransportButton type="button" aria-label="Read series">
            <Disc><path d="M7 5.500 H4.500 V15 H7 M13 5.500 H15.500 V15 H13" fill="none" stroke="#2a2a2a" strokeWidth="1.800" /><path d="M6.500 10 H14" stroke="#2a2a2a" strokeWidth="1.800" strokeDasharray="1.800 1.100" /></Disc>
          </TransportButton>
          <TransportButton type="button" aria-label="Read continuously">
            <Disc><path d="M10 10 C8 6.500 3.500 7 3.500 10 C3.500 13 8 13.500 10 10 C12 6.500 16.500 7 16.500 10 C16.500 13 12 13.500 10 10z" fill="none" stroke="#2a2a2a" strokeWidth="1.500" /></Disc>
          </TransportButton>
          <TransportButton type="button" aria-label="Repeat" $off>
            <Disc off><path d="M5 9.500 A5 5 0 0 1 13 6 M15 10.500 A5 5 0 0 1 7 14" fill="none" stroke="#0e0e0e" strokeWidth="2.400" /><path d="M15.500 3.500 V8.500 H10.500z M4.500 16.500 V11.500 H9.500z" fill="#0e0e0e" /></Disc>
          </TransportButton>
          <TransportButton type="button" aria-label="Record" $off><Disc off /></TransportButton>
          <StepButton type="button">
            <Disc><path d="M10 5 L5.500 10 L10 15 M14.500 5 L10 10 L14.500 15" fill="none" stroke="#2a2a2a" strokeWidth="1.500" /></Disc>
            Back
          </StepButton>
          <StepButton type="button">
            Next
            <Disc><path d="M5.500 5 L10 10 L5.500 15 M10 5 L14.500 10 L10 15" fill="none" stroke="#2a2a2a" strokeWidth="1.500" /></Disc>
          </StepButton>
        </Transport>
      </PatchBar>

      <TaskBar>
        <svg width="360" height="8" aria-hidden="true">
          <path d="M28 8 L38 4 V8z" fill="#dfeaf2" />
          <rect x="67" y="5" width="15" height="3" fill="#b9b58a" />
          <path d="M151 3 L158 8 H152z" fill="#d8a070" />
          <circle cx="205" cy="14" r="10" fill="#57b7e6" />
          <rect x="252" y="5" width="31" height="4" fill="#008a00" />
          <rect x="300.500" y="1.500" width="57" height="12" fill="#76a5c4" stroke="#d4e4ee" />
          <path d="M317 4 Q323 3 326 8 H320z" fill="#1a0c0c" />
        </svg>
      </TaskBar>
    </Shell>
  </>
);

export default App;
